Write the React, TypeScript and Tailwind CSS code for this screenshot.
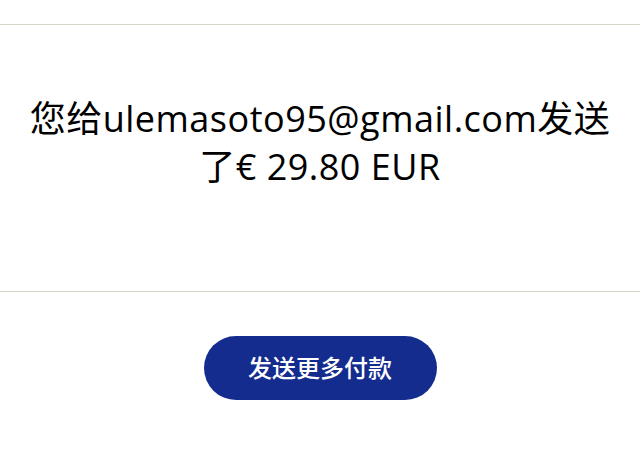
export default function App() {
  return (
    <div className="flex h-[455px] w-[640px] flex-col bg-white font-['Open_Sans','Noto_Sans_CJK_SC',sans-serif] text-[#000]">
      <div className="h-[25px] border-b border-[#d6d5cc]" />
      <div className="flex h-[267px] items-center justify-center border-b border-[#d6d5cc] pb-[30px]">
        <h1 className="max-w-[600px] text-center text-[36px] leading-[48px] font-normal tracking-[0.5px]">
          您给ulemasoto95@gmail.com发送了€ 29.80 EUR
        </h1>
      </div>
      <div className="flex justify-center pt-[44px]">
        <button className="h-[64px] w-[233px] rounded-full bg-[#142c8e] text-[24px] font-medium text-white">
          发送更多付款
        </button>
      </div>
    </div>
  );
}
